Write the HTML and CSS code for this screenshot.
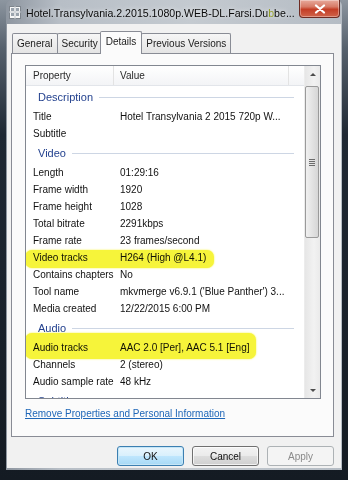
FILE: index.html
```html
<!DOCTYPE html>
<html lang="en">
<head>
    <meta charset="UTF-8">
    <meta name="viewport" content="width=device-width, initial-scale=1.0">
    <title>Properties - Details</title>
    <link rel="stylesheet" href="styles.css">
</head>
<body>
    <div class="window">
        <div class="titlebar">
            <svg class="app-icon" width="12" height="13" viewBox="0 0 12 13">
                <rect x="0.5" y="0.5" width="11" height="12" fill="#f7f7f7" stroke="#7d848c"/>
                <rect x="2" y="2" width="3" height="3" fill="#9aa3ad"/>
                <rect x="7" y="2" width="3" height="3" fill="#9aa3ad"/>
                <rect x="2" y="7" width="3" height="3" fill="#9aa3ad"/>
                <rect x="7" y="7" width="3" height="3" fill="#9aa3ad"/>
                <path d="M0 6h12M6 0v13" stroke="#c4c9cf" stroke-width="1"/>
            </svg>
            <span class="title">Hotel.Transylvania.2.2015.1080p.WEB-DL.Farsi.Du<span class="pen">b</span>be...</span>
            <button class="close-btn" aria-label="Close">
                <svg width="12" height="10" viewBox="0 0 12 10">
                    <path d="M2 1.5l8 7M10 1.5l-8 7" stroke="#fff" stroke-width="2.2" stroke-linecap="round"/>
                </svg>
            </button>
        </div>

        <div class="client">
            <div class="tabs">
                <div class="tab">General</div>
                <div class="tab">Security</div>
                <div class="tab active">Details</div>
                <div class="tab">Previous Versions</div>
            </div>

            <div class="panel">
                <div class="listview">
                    <div class="list-body">
                        <div class="list-header">
                            <div class="col-prop">Property</div>
                            <div class="col-val">Value</div>
                        </div>

                        <div class="group">Description</div>
                        <div class="row"><div class="prop">Title</div><div class="val">Hotel Transylvania 2 2015 720p W...</div></div>
                        <div class="row"><div class="prop">Subtitle</div><div class="val"></div></div>

                        <div class="group">Video</div>
                        <div class="row"><div class="prop">Length</div><div class="val">01:29:16</div></div>
                        <div class="row"><div class="prop">Frame width</div><div class="val">1920</div></div>
                        <div class="row"><div class="prop">Frame height</div><div class="val">1028</div></div>
                        <div class="row"><div class="prop">Total bitrate</div><div class="val">2291kbps</div></div>
                        <div class="row"><div class="prop">Frame rate</div><div class="val">23 frames/second</div></div>
                        <div class="row marked mark-video"><div class="prop">Video tracks</div><div class="val">H264 (High @L4.1)</div></div>
                        <div class="row"><div class="prop">Contains chapters</div><div class="val">No</div></div>
                        <div class="row"><div class="prop">Tool name</div><div class="val">mkvmerge v6.9.1 ('Blue Panther') 3...</div></div>
                        <div class="row"><div class="prop">Media created</div><div class="val">12/22/2015 6:00 PM</div></div>

                        <div class="group">Audio</div>
                        <div class="row marked mark-audio"><div class="prop">Audio tracks</div><div class="val">AAC 2.0 [Per], AAC 5.1 [Eng]</div></div>
                        <div class="row"><div class="prop">Channels</div><div class="val">2 (stereo)</div></div>
                        <div class="row"><div class="prop">Audio sample rate</div><div class="val">48 kHz</div></div>

                        <div class="group">Subtitle</div>
                    </div>

                    <div class="scrollbar">
                        <div class="sb-arrow up"></div>
                        <div class="sb-thumb"><span class="grip"></span></div>
                        <div class="sb-arrow down"></div>
                    </div>
                </div>

                <a class="remove-link" href="#">Remove Properties and Personal Information</a>
            </div>

            <div class="dialog-buttons">
                <button class="btn default">OK</button>
                <button class="btn">Cancel</button>
                <button class="btn" disabled>Apply</button>
            </div>
        </div>
    </div>
</body>
</html>
```

FILE: styles.css
```css
:root {
    --win-border: #898c95;
    --list-border: #828790;
    --group-blue: #24428f;
    --client-bg: #f1f1f1;
    --panel-bg: #fbfbfb;
    --marker: #f6f43a;
}

* {
    box-sizing: border-box;
}

body {
    margin: 0;
    width: 348px;
    height: 480px;
    overflow: hidden;
    background: linear-gradient(180deg, #8d96a0 0, #56616d 10%, #1f2833 28%, #141b23 100%);
    font-family: "Segoe UI", "Liberation Sans", Arial, sans-serif;
    font-size: 10px;
    color: #111;
}

/* Window frame */
.window {
    margin-left: 6px;
    width: 336px;
    height: 470px;
    padding: 0 1px 2px 1px;
    display: flex;
    flex-direction: column;
    border-radius: 6px 6px 0 0;
    background: linear-gradient(90deg, #8e96a0 0, #b7bec6 16%, #c4cad0 55%, #b5bcc4 100%);
}

.titlebar {
    height: 24px;
    display: flex;
    align-items: flex-start;
}

.app-icon {
    margin: 6px 5px 0 2px;
    flex-shrink: 0;
}

.title {
    flex: 1;
    padding-top: 7px;
    font-size: 10.6px;
    line-height: 13px;
    white-space: nowrap;
    overflow: hidden;
    color: #0a0a0a;
    text-shadow: 0 0 5px rgba(255, 255, 255, 0.9);
}

.title .pen {
    color: #8f9a1c;
}

.close-btn {
    width: 41px;
    height: 18px;
    margin-right: 1px;
    padding: 0;
    flex-shrink: 0;
    display: flex;
    align-items: center;
    justify-content: center;
    border: 1px solid #6e2b22;
    border-top: none;
    border-radius: 0 0 4px 4px;
    background: linear-gradient(180deg, #e8aa9c 0, #d77a66 40%, #c43d25 55%, #d0644a 100%);
    box-shadow: inset 0 0 0 1px rgba(255, 255, 255, 0.35);
}

/* Client area */
.client {
    flex: 1;
    padding: 7px 7px 0 4px;
    display: flex;
    flex-direction: column;
    background: var(--client-bg);
}

.tabs {
    height: 22px;
    padding-left: 1px;
    display: flex;
    align-items: flex-end;
    position: relative;
    z-index: 1;
}

.tab {
    height: 20px;
    padding: 0 4px;
    margin-right: -1px;
    line-height: 19px;
    white-space: nowrap;
    color: #1b1b1b;
    border: 1px solid var(--win-border);
    border-bottom: none;
    border-radius: 2px 2px 0 0;
    background: linear-gradient(180deg, #f6f6f6, #e4e4e4);
}

.tab.active {
    height: 23px;
    margin: 0 -1px -1px -2px;
    padding: 0 5px;
    line-height: 20px;
    background: var(--panel-bg);
    position: relative;
    z-index: 2;
}

.panel {
    height: 384px;
    padding: 11px 12px 0 13px;
    border: 1px solid var(--win-border);
    background: var(--panel-bg);
}

/* List view */
.listview {
    height: 334px;
    display: flex;
    border: 1px solid var(--list-border);
    background: #fff;
}

.list-body {
    flex: 1;
    overflow: hidden;
}

.list-header {
    height: 20px;
    display: flex;
    border-bottom: 1px solid #e2e5ea;
    background: linear-gradient(180deg, #ffffff, #f3f4f6);
    color: #2a2a2a;
}

.list-header > div {
    line-height: 19px;
    border-right: 1px solid #e3e3e3;
}

.col-prop {
    width: 88px;
    padding-left: 7px;
}

.col-val {
    width: 175px;
    padding-left: 6px;
}

.group {
    height: 22px;
    padding: 0 10px 0 12px;
    display: flex;
    align-items: center;
    font-size: 11px;
    color: var(--group-blue);
}

.group::after {
    content: '';
    flex: 1;
    height: 1px;
    margin-left: 6px;
    background: #cdd6e4;
}

.row {
    height: 17px;
    line-height: 17px;
    display: flex;
    white-space: nowrap;
    position: relative;
}

.prop {
    width: 88px;
    padding-left: 7px;
    flex-shrink: 0;
}

.val {
    padding-left: 6px;
}

/* Highlighter marks drawn over the rows */
.row.marked::after {
    content: '';
    position: absolute;
    left: -1px;
    background: var(--marker);
    border-radius: 7px;
    box-shadow: 0 0 2px var(--marker);
    mix-blend-mode: multiply;
}

.mark-video::after {
    top: 1px;
    width: 189px;
    height: 18px;
}

.mark-audio::after {
    top: -6px;
    width: 231px;
    height: 26px;
}

/* Scrollbar */
.scrollbar {
    width: 16px;
    display: flex;
    flex-direction: column;
    border-left: 1px solid #ececec;
    background: linear-gradient(90deg, #e6e6e6, #f2f2f2 60%, #eaeaea);
}

.sb-arrow {
    height: 17px;
    position: relative;
}

.sb-arrow::before {
    content: '';
    position: absolute;
    left: 5px;
    top: 7px;
    border: 3px solid transparent;
}

.sb-arrow.up::before {
    border-bottom-color: #4d4d4d;
    top: 4px;
}

.sb-arrow.down {
    margin-top: auto;
}

.sb-arrow.down::before {
    border-top-color: #4d4d4d;
    top: 8px;
}

.sb-thumb {
    height: 152px;
    margin: 3px 1px 0 0;
    display: flex;
    align-items: center;
    justify-content: center;
    border: 1px solid #9a9a9a;
    border-radius: 2px;
    background: linear-gradient(90deg, #f0f0f0, #e2e2e2 55%, #d6d6d6);
}

.grip {
    width: 6px;
    height: 7px;
    background: repeating-linear-gradient(180deg, #6c6c6c 0 1px, transparent 1px 2px);
}

.remove-link {
    display: block;
    margin-top: 9px;
    line-height: 12px;
    color: #1f67b8;
    text-decoration: underline;
}

/* Dialog buttons */
.dialog-buttons {
    padding-top: 9px;
    display: flex;
    justify-content: flex-end;
    gap: 8px;
}

.btn {
    width: 67px;
    height: 20px;
    padding: 0;
    font: inherit;
    color: #111;
    border: 1px solid #707070;
    border-radius: 3px;
    background: linear-gradient(180deg, #f3f3f3 0, #ebebeb 48%, #dddddd 52%, #cfcfcf 100%);
    box-shadow: inset 0 0 0 1px rgba(255, 255, 255, 0.7);
}

.btn.default {
    border-color: #3c7fb1;
    background: linear-gradient(180deg, #eaf6fd 0, #d9f0fc 48%, #bee6fd 52%, #a7d9f5 100%);
    box-shadow: inset 0 0 0 1px #c5e6f7;
}

.btn:disabled {
    color: #8a8a8a;
    border-color: #adb2b5;
    background: #f4f4f4;
    box-shadow: none;
}
```
